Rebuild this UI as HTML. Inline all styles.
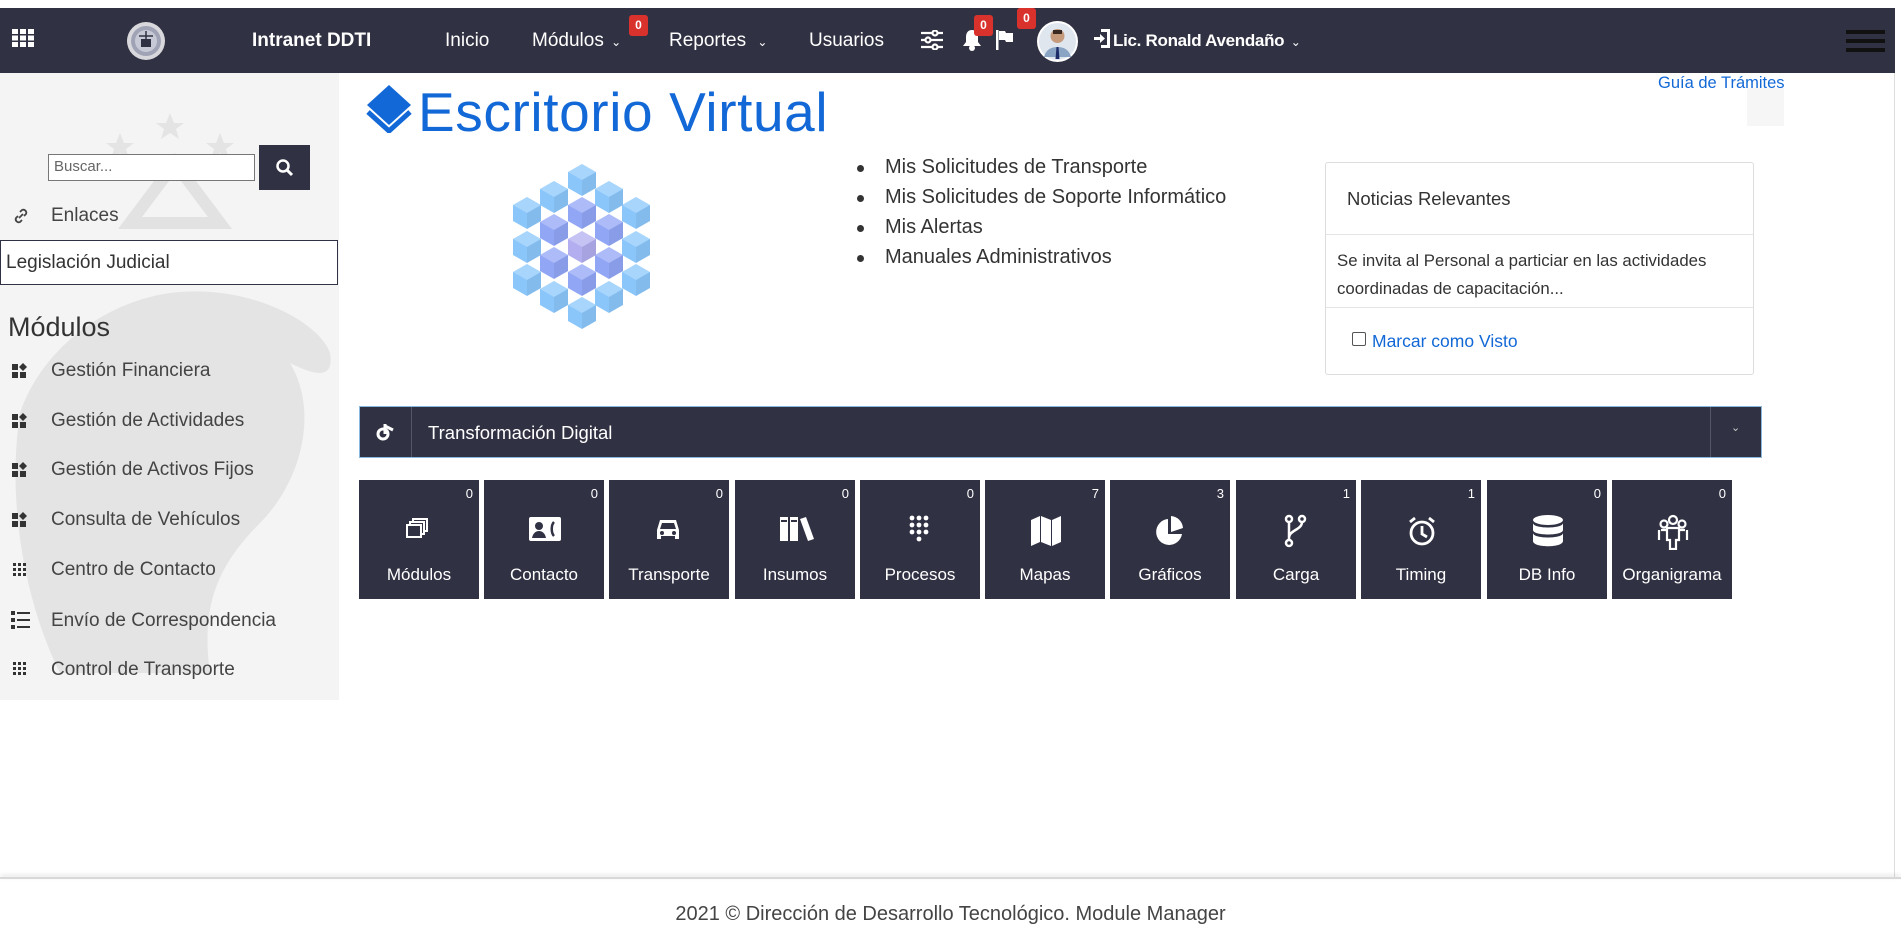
<!DOCTYPE html>
<html><head><meta charset="utf-8">
<style>
*{box-sizing:border-box;margin:0;padding:0}
body{width:1901px;height:948px;overflow:hidden;background:#fff;font-family:"Liberation Sans",sans-serif;position:relative;color:#333}
.abs{position:absolute}
.nav{left:0;top:8px;width:1895px;height:65px;background:#303142}
.nt{color:#fff;font-size:19px;top:30px;white-space:nowrap}
.badge{background:#d9322d;color:#fff;font-size:12px;font-weight:bold;border-radius:3px;width:19px;height:21px;text-align:center;line-height:21px}
.side{left:0;top:73px;width:339px;height:627px;background:#f4f4f4;overflow:hidden}
.si{left:51px;font-size:19px;color:#444;white-space:nowrap}
.tile{top:480px;width:120px;height:119px;background:#303142;color:#fff}
.tile .c{position:absolute;right:6px;top:6px;font-size:13px}
.tile .l{position:absolute;left:0;right:0;top:85px;text-align:center;font-size:17px;white-space:nowrap}
.tile svg{position:absolute;left:44px;top:34px}
.li{left:885px;font-size:20px;color:#333;white-space:nowrap}
.dot{left:857px;width:7px;height:7px;border-radius:50%;background:#333}
</style></head><body>
<div class="abs nav"></div>
<svg class="abs" style="left:12px;top:29px" width="22" height="18" viewBox="0 0 22 18" fill="#fff"><rect x="0" y="0" width="6" height="5"/><rect x="8" y="0" width="6" height="5"/><rect x="16" y="0" width="6" height="5"/><rect x="0" y="6.5" width="6" height="5"/><rect x="8" y="6.5" width="6" height="5"/><rect x="16" y="6.5" width="6" height="5"/><rect x="0" y="13" width="6" height="5"/><rect x="8" y="13" width="6" height="5"/><rect x="16" y="13" width="6" height="5"/></svg>
<svg class="abs" style="left:126px;top:21px" width="40" height="40" viewBox="0 0 40 40"><circle cx="20" cy="20" r="19" fill="#d8d8dc"/><circle cx="20" cy="20" r="15" fill="#9fa3b5"/><circle cx="20" cy="20" r="11" fill="#c7cad6"/><rect x="15" y="18" width="10" height="8" fill="#303142"/><path d="M20 10v8M13 15h14" stroke="#303142" stroke-width="1.5"/></svg>
<div class="abs nt" style="left:252px;top:30px;font-weight:bold;font-size:19px">Intranet DDTI</div>
<div class="abs nt" style="left:445px">Inicio</div>
<div class="abs nt" style="left:532px">Módulos <span style="font-size:12px;margin-left:2px">&#8964;</span></div>
<div class="abs badge" style="left:629px;top:15px">0</div>
<div class="abs nt" style="left:669px">Reportes <span style="font-size:12px;margin-left:6px">&#8964;</span></div>
<div class="abs nt" style="left:809px">Usuarios</div>
<svg class="abs" style="left:921px;top:30px" width="22" height="20" viewBox="0 0 22 20" stroke="#fff" stroke-width="2.2" fill="#303142"><path d="M0 3h22M0 10h22M0 17h22"/><circle cx="14" cy="3" r="2.5"/><circle cx="7" cy="10" r="2.5"/><circle cx="14" cy="17" r="2.5"/></svg>
<svg class="abs" style="left:962px;top:29px" width="20" height="22" viewBox="0 0 20 22" fill="#fff"><path d="M10 1c-4 0-6 3-6 7v5l-3 4h18l-3-4V8c0-4-2-7-6-7z"/><circle cx="10" cy="19" r="3"/></svg>
<div class="abs badge" style="left:974px;top:15px">0</div>
<svg class="abs" style="left:996px;top:29px" width="18" height="22" viewBox="0 0 18 22" fill="#fff"><rect x="0" y="1" width="2.5" height="20"/><path d="M3 2h6l1 2h7v9h-7l-1-2H3z"/></svg>
<div class="abs badge" style="left:1017px;top:8px">0</div>
<svg class="abs" style="left:1037px;top:21px" width="41" height="41" viewBox="0 0 41 41"><circle cx="20.5" cy="20.5" r="19.5" fill="#dfe6ee" stroke="#fff" stroke-width="2"/><circle cx="20.5" cy="15" r="7" fill="#c69b7b"/><rect x="16" y="9" width="9" height="4" fill="#3a2a22"/><path d="M7 36c2-8 8-10 13.5-10S32 28 34 36z" fill="#8aa4c4"/><path d="M19.5 26h2l1 12h-4z" fill="#1d2b66"/></svg>
<svg class="abs" style="left:1094px;top:29px" width="16" height="19" viewBox="0 0 16 19" fill="#fff"><path d="M7 0h9v19H7v-3h6V3H7z"/><path d="M0 8h6V5l5 4.5-5 4.5v-3H0z"/></svg>
<div class="abs nt" style="left:1113px;top:31px;font-size:17px;font-weight:bold;letter-spacing:-0.3px">Lic. Ronald Avendaño <span style="font-size:12px;font-weight:normal;margin-left:2px">&#8964;</span></div>
<div class="abs" style="left:1846px;top:30px;width:39px;height:4px;background:#111"></div>
<div class="abs" style="left:1846px;top:39px;width:39px;height:4px;background:#111"></div>
<div class="abs" style="left:1846px;top:48px;width:39px;height:4px;background:#111"></div>
<div class="abs" style="left:1894px;top:73px;width:1px;height:805px;background:#ddd"></div>

<div class="abs side">
 <svg class="abs" style="left:0;top:0" width="339" height="627" viewBox="0 0 339 627">
  <g fill="#e4e4e4">
   <path d="M20 340c20-60 80-110 150-120 80-10 150 30 160 60 5 30-20 20-40 10 30 50 10 120-30 160-40 40-60 80-50 150H60C30 540 5 440 20 340z"/>
   <path d="M120 60l4 10h10l-8 6 3 10-9-6-9 6 3-10-8-6h10z"/><path d="M170 40l4 10h10l-8 6 3 10-9-6-9 6 3-10-8-6h10z"/><path d="M220 60l4 10h10l-8 6 3 10-9-6-9 6 3-10-8-6h10z"/>
   <path d="M130 150h90l-45-60z" fill="none" stroke="#e2e2e2" stroke-width="12"/>
  </g>
 </svg>
 <div class="abs" style="left:48px;top:81px;width:207px;height:27px;background:#fff;border:1px solid #777;font-size:15px;color:#666;padding:3px 5px">Buscar...</div>
 <div class="abs" style="left:259px;top:72px;width:51px;height:45px;background:#303142"></div>
 <svg class="abs" style="left:275px;top:85px" width="20" height="20" viewBox="0 0 20 20"><circle cx="8" cy="8" r="5.5" fill="none" stroke="#fff" stroke-width="2.5"/><path d="M12 12l5 5" stroke="#fff" stroke-width="3"/></svg>
 <svg class="abs" style="left:11px;top:133px" width="20" height="20" viewBox="0 0 20 20" fill="none" stroke="#444" stroke-width="1.8"><path d="M8 12l4-4"/><path d="M9 6l2-2a3 3 0 0 1 4 4l-2 2"/><path d="M11 14l-2 2a3 3 0 0 1-4-4l2-2"/></svg>
 <div class="abs si" style="top:132px">Enlaces</div>
 <div class="abs" style="left:0;top:167px;width:338px;height:45px;background:#fff;border:1px solid #303142;font-size:19px;color:#333;padding:11px 5px">Legislación Judicial</div>
 <div class="abs" style="left:8px;top:239px;font-size:27px;color:#333">Módulos</div>
 <div class="abs" style="left:12px;top:290px"><svg width="16" height="16" viewBox="0 0 16 16" fill="#333"><rect x="0" y="1" width="6" height="6"/><rect x="0" y="9" width="6" height="6"/><rect x="8" y="9" width="6" height="6"/><path d="M11 0l4 4-4 4-4-4z"/></svg></div>
 <div class="abs si" style="top:287px">Gestión Financiera</div>
 <div class="abs" style="left:12px;top:340px"><svg width="16" height="16" viewBox="0 0 16 16" fill="#333"><rect x="0" y="1" width="6" height="6"/><rect x="0" y="9" width="6" height="6"/><rect x="8" y="9" width="6" height="6"/><path d="M11 0l4 4-4 4-4-4z"/></svg></div>
 <div class="abs si" style="top:337px">Gestión de Actividades</div>
 <div class="abs" style="left:12px;top:389px"><svg width="16" height="16" viewBox="0 0 16 16" fill="#333"><rect x="0" y="1" width="6" height="6"/><rect x="0" y="9" width="6" height="6"/><rect x="8" y="9" width="6" height="6"/><path d="M11 0l4 4-4 4-4-4z"/></svg></div>
 <div class="abs si" style="top:386px">Gestión de Activos Fijos</div>
 <div class="abs" style="left:12px;top:439px"><svg width="16" height="16" viewBox="0 0 16 16" fill="#333"><rect x="0" y="1" width="6" height="6"/><rect x="0" y="9" width="6" height="6"/><rect x="8" y="9" width="6" height="6"/><path d="M11 0l4 4-4 4-4-4z"/></svg></div>
 <div class="abs si" style="top:436px">Consulta de Vehículos</div>
 <div class="abs" style="left:13px;top:490px"><svg width="14" height="14" viewBox="0 0 14 14" fill="#333"><rect x="0" y="0" width="3" height="3"/><rect x="5" y="0" width="3" height="3"/><rect x="10" y="0" width="3" height="3"/><rect x="0" y="5" width="3" height="3"/><rect x="5" y="5" width="3" height="3"/><rect x="10" y="5" width="3" height="3"/><rect x="0" y="10" width="3" height="3"/><rect x="5" y="10" width="3" height="3"/><rect x="10" y="10" width="3" height="3"/></svg></div>
 <div class="abs si" style="top:486px">Centro de Contacto</div>
 <div class="abs" style="left:11px;top:538px"><svg width="19" height="18" viewBox="0 0 19 18" fill="#333"><rect x="0" y="0" width="4" height="4"/><rect x="6" y="1" width="13" height="2"/><rect x="0" y="7" width="4" height="4"/><rect x="6" y="8" width="13" height="2"/><rect x="0" y="14" width="4" height="4"/><rect x="6" y="15" width="13" height="2"/></svg></div>
 <div class="abs si" style="top:537px">Envío de Correspondencia</div>
 <div class="abs" style="left:0;top:571px;width:339px;height:37px;overflow:hidden">
  <div class="abs" style="left:13px;top:18px"><svg width="14" height="14" viewBox="0 0 14 14" fill="#333"><rect x="0" y="0" width="3" height="3"/><rect x="5" y="0" width="3" height="3"/><rect x="10" y="0" width="3" height="3"/><rect x="0" y="5" width="3" height="3"/><rect x="5" y="5" width="3" height="3"/><rect x="10" y="5" width="3" height="3"/><rect x="0" y="10" width="3" height="3"/><rect x="5" y="10" width="3" height="3"/><rect x="10" y="10" width="3" height="3"/></svg></div>
  <div class="abs si" style="top:15px">Control de Transporte</div>
 </div>
</div>

<svg class="abs" style="left:366px;top:85px" width="46" height="48" viewBox="0 0 46 48"><path d="M23 0l22 20-22 20L1 20z" fill="#1268d6"/><path d="M2 27l21 19 21-19" fill="none" stroke="#1268d6" stroke-width="5"/></svg>
<div class="abs" style="left:418px;top:80px;font-size:55px;color:#1268d6;letter-spacing:0.6px;white-space:nowrap">Escritorio Virtual</div>
<div class="abs" style="left:1658px;top:74px;font-size:16.5px;color:#1268d6">Guía de Trámites</div>
<div class="abs" style="left:1747px;top:88px;width:37px;height:38px;background:#f6f6f6"></div>

<svg class="abs" style="left:500px;top:160px" width="160" height="175" viewBox="500 160 160 175">
 <defs><g id="cb"><path d="M0-16L14-8V8L0 16-14 8V-8z"/><path d="M0-16L14-8 0 0-14-8z" fill="#fff" opacity=".25"/><path d="M0 0L14-8V8L0 16z" fill="#000" opacity=".06"/></g></defs>
 <g fill="#85c4fb" opacity=".95">
  <use href="#cb" x="527" y="213"/><use href="#cb" x="527" y="247"/><use href="#cb" x="527" y="280"/>
  <use href="#cb" x="636" y="213"/><use href="#cb" x="636" y="247"/><use href="#cb" x="636" y="280"/>
  <use href="#cb" x="554" y="197"/><use href="#cb" x="554" y="297"/><use href="#cb" x="609" y="197"/><use href="#cb" x="609" y="297"/>
  <use href="#cb" x="582" y="180"/><use href="#cb" x="582" y="313"/>
 </g>
 <g fill="#92a6f6">
  <use href="#cb" x="554" y="230"/><use href="#cb" x="554" y="263"/><use href="#cb" x="609" y="230"/><use href="#cb" x="609" y="263"/>
  <use href="#cb" x="582" y="213"/><use href="#cb" x="582" y="280"/>
 </g>
 <use href="#cb" x="582" y="247" fill="#b2aef0"/>
</svg>

<div class="abs dot" style="top:165px"></div><div class="abs li" style="top:156px">Mis Solicitudes de Transporte</div>
<div class="abs dot" style="top:195px"></div><div class="abs li" style="top:186px">Mis Solicitudes de Soporte Informático</div>
<div class="abs dot" style="top:225px"></div><div class="abs li" style="top:216px">Mis Alertas</div>
<div class="abs dot" style="top:255px"></div><div class="abs li" style="top:246px">Manuales Administrativos</div>

<div class="abs" style="left:1325px;top:162px;width:429px;height:213px;border:1px solid #ddd;border-radius:3px"></div>
<div class="abs" style="left:1347px;top:188px;font-size:18.5px;color:#333">Noticias Relevantes</div>
<div class="abs" style="left:1326px;top:234px;width:427px;height:1px;background:#e5e5e5"></div>
<div class="abs" style="left:1337px;top:247px;font-size:16.8px;color:#333;line-height:28px">Se invita al Personal a particiar en las actividades<br>coordinadas de capacitación...</div>
<div class="abs" style="left:1326px;top:307px;width:427px;height:1px;background:#e5e5e5"></div>
<div class="abs" style="left:1352px;top:332px;width:14px;height:14px;border:1px solid #555;border-radius:2px;background:#fff"></div>
<div class="abs" style="left:1372px;top:331px;font-size:17.5px;color:#1268d6">Marcar como Visto</div>

<div class="abs" style="left:359px;top:406px;width:1403px;height:52px;background:#303142;border:1px solid #8ab9e0"></div>
<div class="abs" style="left:411px;top:407px;width:1px;height:50px;background:#55566a"></div>
<div class="abs" style="left:1710px;top:407px;width:1px;height:50px;background:#55566a"></div>
<svg class="abs" style="left:375px;top:421px" width="22" height="22" viewBox="0 0 22 22"><circle cx="8" cy="13" r="5" fill="none" stroke="#fff" stroke-width="3"/><path d="M10 3v10M10 5l8 4" stroke="#fff" stroke-width="3"/></svg>
<div class="abs" style="left:428px;top:422px;font-size:18.5px;color:#fff">Transformación Digital</div>
<div class="abs" style="left:1731px;top:421px;font-size:11px;color:#ccc">&#8964;</div>

<div class="abs tile" style="left:359px"><span class="c">0</span><svg width="30" height="30" viewBox="0 0 30 30" fill="none" stroke="#fff" stroke-width="2"><rect x="4" y="11" width="14" height="12"/><path d="M7 11V8h14v12h-3M10 8V5h14v12h-3"/></svg><span class="l">Módulos</span></div>
<div class="abs tile" style="left:484px"><span class="c">0</span><svg width="34" height="30" viewBox="0 0 34 30"><rect x="1" y="3" width="32" height="24" rx="2" fill="#fff"/><circle cx="11" cy="12" r="4" fill="#303142"/><path d="M4 24c1-5 4-7 7-7s6 2 7 7z" fill="#303142"/><path d="M26 8c-3 3-3 11 0 14" stroke="#303142" stroke-width="2.5" fill="none"/></svg><span class="l">Contacto</span></div>
<div class="abs tile" style="left:609px"><span class="c">0</span><svg width="30" height="30" viewBox="0 0 30 30" fill="#fff"><path d="M7 6h16l3 10v9h-4v-3H8v3H4v-9z"/><path d="M9 9h12l2 6H7z" fill="#303142"/><circle cx="9" cy="19" r="2" fill="#303142"/><circle cx="21" cy="19" r="2" fill="#303142"/></svg><span class="l">Transporte</span></div>
<div class="abs tile" style="left:735px"><span class="c">0</span><svg width="36" height="30" viewBox="0 0 36 30" fill="#fff"><rect x="1" y="3" width="8" height="24"/><rect x="11" y="3" width="8" height="24"/><path d="M21 5l6-2 8 22-6 2z"/><rect x="2" y="6" width="6" height="2" fill="#303142"/><rect x="12" y="6" width="6" height="2" fill="#303142"/></svg><span class="l">Insumos</span></div>
<div class="abs tile" style="left:860px"><span class="c">0</span><svg width="30" height="32" viewBox="0 0 30 32" fill="#fff"><circle cx="8" cy="4" r="2.4"/><circle cx="15" cy="4" r="2.4"/><circle cx="22" cy="4" r="2.4"/><circle cx="8" cy="11" r="2.4"/><circle cx="15" cy="11" r="2.4"/><circle cx="22" cy="11" r="2.4"/><circle cx="8" cy="18" r="2.4"/><circle cx="15" cy="18" r="2.4"/><circle cx="22" cy="18" r="2.4"/><circle cx="15" cy="25" r="2.4"/></svg><span class="l">Procesos</span></div>
<div class="abs tile" style="left:985px"><span class="c">7</span><svg width="34" height="32" viewBox="0 0 34 32" fill="#fff"><path d="M2 6l9-4v26l-9 4z"/><path d="M12 2l10 4v26l-10-4z"/><path d="M23 6l9-4v26l-9 4z"/></svg><span class="l">Mapas</span></div>
<div class="abs tile" style="left:1110px"><span class="c">3</span><svg width="32" height="34" viewBox="0 0 32 34" fill="#fff"><path d="M14 5a13 13 0 1 0 14 15H14z"/><path d="M17 2a13 13 0 0 1 12 12l-12 4z"/></svg><span class="l">Gráficos</span></div>
<div class="abs tile" style="left:1236px"><span class="c">1</span><svg width="30" height="34" viewBox="0 0 30 34" fill="none" stroke="#fff" stroke-width="2.5"><circle cx="9" cy="5" r="3"/><circle cx="22" cy="5" r="3"/><circle cx="9" cy="29" r="3"/><path d="M9 8v18M22 8c0 8-13 8-13 16"/></svg><span class="l">Carga</span></div>
<div class="abs tile" style="left:1361px"><span class="c">1</span><svg width="34" height="34" viewBox="0 0 34 34" fill="none" stroke="#fff" stroke-width="2.8"><circle cx="17" cy="19" r="11"/><path d="M17 12v8l5 3M5 8l5-4M29 8l-5-4"/></svg><span class="l">Timing</span></div>
<div class="abs tile" style="left:1487px"><span class="c">0</span><svg width="34" height="36" viewBox="0 0 34 36" fill="#fff"><ellipse cx="17" cy="6" rx="15" ry="5"/><path d="M2 9c0 6 30 6 30 0v7c0 6-30 6-30 0z"/><path d="M2 19c0 6 30 6 30 0v8c0 7-30 7-30 0z"/></svg><span class="l">DB Info</span></div>
<div class="abs tile" style="left:1612px"><span class="c">0</span><svg width="34" height="36" viewBox="0 0 34 36" fill="none" stroke="#fff" stroke-width="2.2"><circle cx="17" cy="6" r="4"/><circle cx="8" cy="10" r="3.5"/><circle cx="26" cy="10" r="3.5"/><path d="M11 14h12v12h-3v9h-6v-9h-3zM5 16h5M29 16h-5M3 16v10M31 16v10"/></svg><span class="l">Organigrama</span></div>

<div class="abs" style="left:0;top:877px;width:1901px;height:2px;background:#d8d8d8;box-shadow:0 -2px 4px rgba(0,0,0,.15)"></div>
<div class="abs" style="left:0;right:0;top:903px;text-align:center;font-size:20px;color:#444">2021 © Dirección de Desarrollo Tecnológico. Module Manager</div>
</body></html>
